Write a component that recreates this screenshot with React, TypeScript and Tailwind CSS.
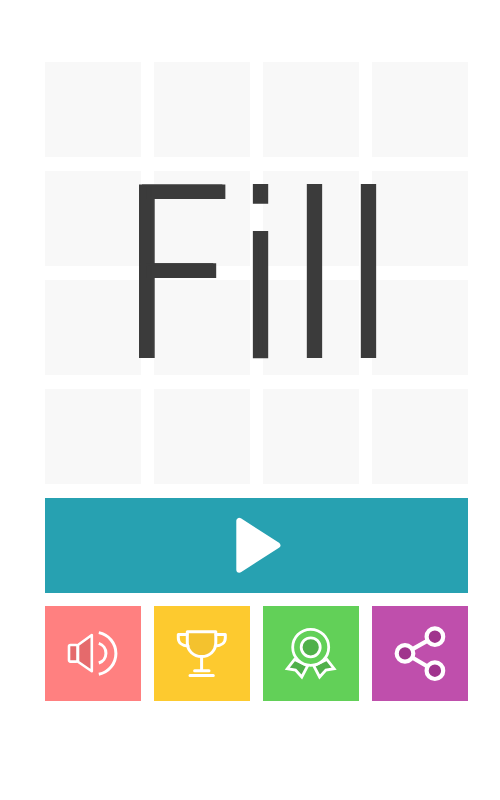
const tile = 'flex h-[95px] w-24 items-start justify-start';

function Title() {
  return (
    <svg
      className="pointer-events-none absolute inset-0"
      width="423"
      height="422"
      viewBox="45 62 423 422"
      role="img"
      aria-label="Fill"
    >
      <g className="fill-[#3b3b3b] stroke-[#3b3b3b]">
        {/* The hard sideways shadow thickens only the upright of the F. */}
        <g className="[filter:drop-shadow(3px_0_0_#3b3b3b)]">
          <text
            transform="scale(0.769 1)"
            x="160"
            y="357"
            fontSize="241.5"
            className="stroke-2 font-light font-['Roboto',sans-serif]"
          >
            F
          </text>
        </g>
        <text
          transform="scale(0.95 1)"
          y="355"
          fontSize="221"
          textAnchor="middle"
          className="stroke-[6.2] font-extralight font-['DejaVu_Sans',sans-serif]"
        >
          <tspan x="275.2">i</tspan>
          <tspan x="331.7">l</tspan>
          <tspan x="388.6">l</tspan>
        </text>
      </g>
    </svg>
  );
}

function SoundIcon() {
  return (
    <svg width="96" height="95" viewBox="0 0 96 95" fill="none" stroke="#fff" strokeWidth="2.6" strokeLinecap="round" strokeLinejoin="round">
      <rect x="24" y="39" width="8.6" height="16.6" rx="1.5" fill="#e56a6c" />
      <path d="M33 39 46.8 29V65.3L33 55.8Z" fill="#e56a6c" />
      <path d="M53.8 26.6A21.2 21.2 0 0 1 53.8 68.2" strokeLinecap="butt" strokeWidth="3" />
      <path d="M53.8 37.4A10.3 10.3 0 0 1 53.8 57" strokeLinecap="butt" strokeWidth="3" />
    </svg>
  );
}

function TrophyIcon() {
  return (
    <svg width="96" height="95" viewBox="0 0 96 95" fill="none" stroke="#fff" strokeWidth="3" strokeLinecap="round" strokeLinejoin="round">
      <path d="M33.3 25.7H61.8V36.5C61.8 45 55.5 50.6 47.6 50.6S33.3 45 33.3 36.5Z" fill="#f4c22e" />
      <path d="M33 28.6H24.3V32C24.3 36.6 28 39.8 34 40M62 28.6H71.3V32C71.3 36.6 67.4 39.8 61.2 40" />
      <path d="M47.6 51V64M40.6 64.7H55M36 69.6H59.3" />
    </svg>
  );
}

function MedalIcon() {
  return (
    <svg width="96" height="95" viewBox="0 0 96 95" fill="none" stroke="#fff" strokeWidth="2.8">
      <path d="M31.6 53.4 24.3 62.7 32.5 64 38.8 71 44.6 59.8ZM63.8 53.4 71.1 62.7 62.9 64 56.6 71 50.8 59.8Z" fill="#50b04a" />
      <circle cx="47.7" cy="41.3" r="18" fill="#62d058" />
      <circle cx="47.7" cy="41.3" r="9.5" fill="#50b04a" />
    </svg>
  );
}

function ShareIcon() {
  return (
    <svg width="96" height="95" viewBox="0 0 96 95" fill="#a0348d" stroke="#fff" strokeWidth="4.2">
      <path d="M62.8 30.7 33 47.4 62.8 64.7" fill="none" />
      <circle cx="33" cy="47.4" r="8.3" />
      <circle cx="62.9" cy="30.7" r="8.3" />
      <circle cx="62.9" cy="64.7" r="8.3" />
    </svg>
  );
}

export default function App() {
  return (
    <main className="h-[800px] w-[500px] bg-white pt-[62px] pl-[45px]">
      <section className="relative grid w-[423px] grid-cols-4 gap-x-[13px] gap-y-3.5">
        {Array.from({ length: 16 }, (_, i) => (
          <div key={i} className="h-[95px] bg-[#f8f8f8]" />
        ))}
        <Title />
      </section>
      <button aria-label="Play" className="mt-3.5 flex h-[95px] w-[423px] items-center justify-start bg-[#27a1b1] pl-[190px]">
        <svg width="48" height="60" viewBox="0 0 48 60" fill="#fff" stroke="#fff" strokeWidth="6" strokeLinejoin="round">
          <path d="M4.3 4.9V53.7L42.4 29.3Z" />
        </svg>
      </button>
      <nav className="mt-[13px] flex w-[423px] gap-[13px]">
        <button aria-label="Sound" className={`${tile} bg-[#ff8080]`}><SoundIcon /></button>
        <button aria-label="Trophies" className={`${tile} bg-[#fdca2f]`}><TrophyIcon /></button>
        <button aria-label="Awards" className={`${tile} bg-[#62d058]`}><MedalIcon /></button>
        <button aria-label="Share" className={`${tile} bg-[#bf4fac]`}><ShareIcon /></button>
      </nav>
    </main>
  );
}
